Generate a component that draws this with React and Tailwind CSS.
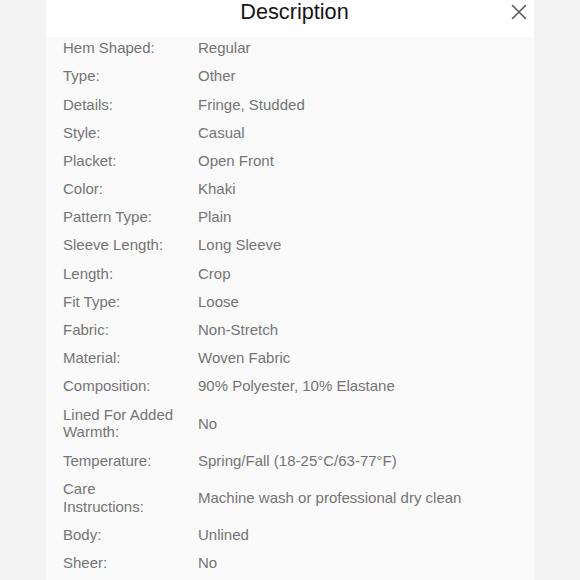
import React from 'react';

const rows = [
  ['Hem Shaped:', 'Regular'],
  ['Type:', 'Other'],
  ['Details:', 'Fringe, Studded'],
  ['Style:', 'Casual'],
  ['Placket:', 'Open Front'],
  ['Color:', 'Khaki'],
  ['Pattern Type:', 'Plain'],
  ['Sleeve Length:', 'Long Sleeve'],
  ['Length:', 'Crop'],
  ['Fit Type:', 'Loose'],
  ['Fabric:', 'Non-Stretch'],
  ['Material:', 'Woven Fabric'],
  ['Composition:', '90% Polyester, 10% Elastane'],
  ['Lined For Added Warmth:', 'No'],
  ['Temperature:', 'Spring/Fall (18-25°C/63-77°F)'],
  ['Care Instructions:', 'Machine wash or professional dry clean'],
  ['Body:', 'Unlined'],
  ['Sheer:', 'No'],
];

const App = () => {
  return (
    <div
      className="w-[580px] h-[580px] overflow-hidden bg-[#f3f3f3] flex justify-center"
      style={{ fontFamily: '"Liberation Sans", Arial, sans-serif' }}
    >
      <div className="w-[488px] bg-[#fafafa] flex flex-col">
        {/* Header */}
        <div className="h-[37px] shrink-0 bg-white relative flex items-start justify-center">
          <span className="mt-[-1px] ml-[9px] text-[21.7px] leading-[26px] text-[#151515]">Description</span>
          <button className="absolute right-[7px] top-[4px] w-[16px] h-[16px] text-[#5a5a5a]">
            <svg viewBox="0 0 16 16" width="16" height="16" fill="none" stroke="currentColor" strokeWidth="1.6" strokeLinecap="round">
              <path d="M1.5 1.5 L14.5 14.5 M14.5 1.5 L1.5 14.5" />
            </svg>
          </button>
        </div>

        {/* Rows */}
        <div className="mt-[-3px] px-[17px] text-[15px] text-[#747474]">
          {rows.map(([label, value], i) => (
            <div key={i} className="grid grid-cols-[135px_1fr] items-center py-[5.15px] leading-[17.9px]">
              <span className="pr-[21px]">{label}</span>
              <span>{value}</span>
            </div>
          ))}
        </div>
      </div>
    </div>
  );
};

export default App;
